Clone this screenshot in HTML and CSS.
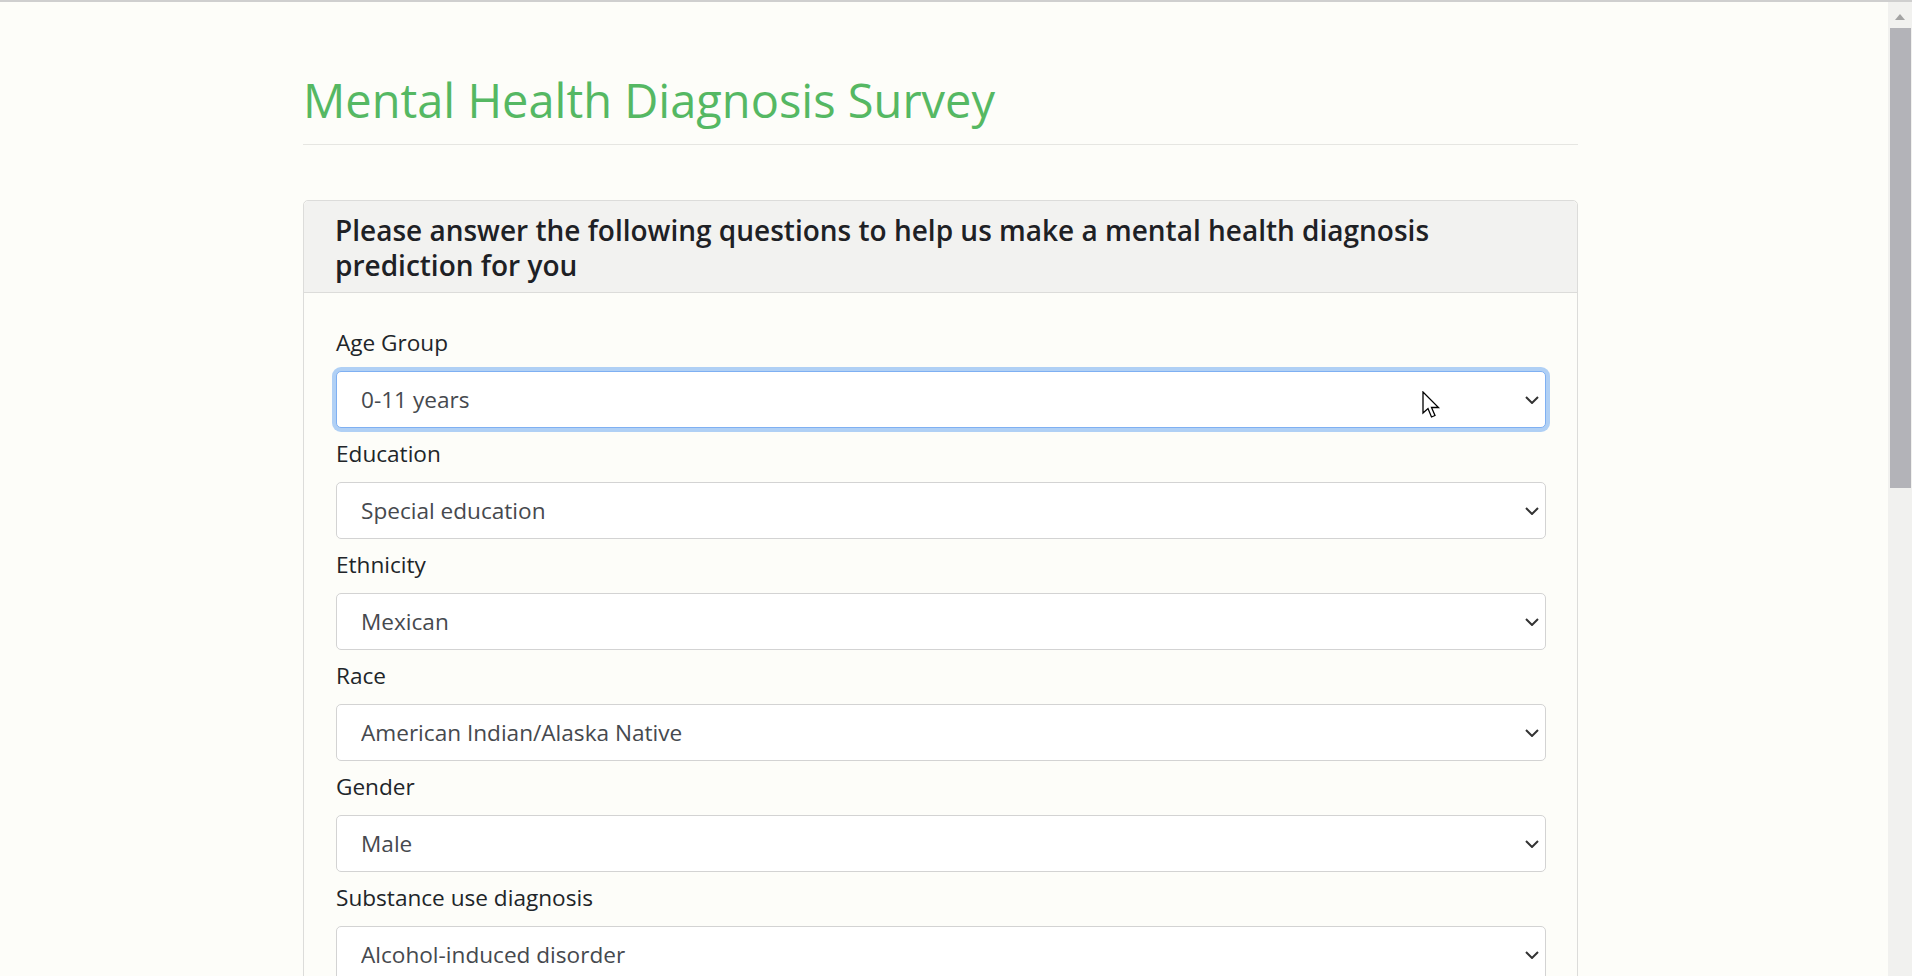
FILE: index.html
```html
<!DOCTYPE html>
<html lang="en">
<head>
<meta charset="utf-8">
<title>Mental Health Diagnosis Survey</title>
<link rel="stylesheet" href="styles.css">
</head>
<body>
<div class="topline"></div>
<div class="viewport">
  <main class="page">
    <div class="container">
      <header class="page-header">
        <h1>Mental Health Diagnosis Survey</h1>
      </header>
      <section class="card">
        <div class="card-header">
          <h2>Please answer the following questions to help us make a mental health diagnosis prediction for you</h2>
        </div>
        <form class="card-body">
          <div class="field">
            <label for="age">Age Group</label>
            <select id="age" class="select is-focused"><option>0-11 years</option></select>
          </div>
          <div class="field">
            <label for="edu">Education</label>
            <select id="edu" class="select"><option>Special education</option></select>
          </div>
          <div class="field">
            <label for="eth">Ethnicity</label>
            <select id="eth" class="select"><option>Mexican</option></select>
          </div>
          <div class="field">
            <label for="race">Race</label>
            <select id="race" class="select"><option>American Indian/Alaska Native</option></select>
          </div>
          <div class="field">
            <label for="gender">Gender</label>
            <select id="gender" class="select"><option>Male</option></select>
          </div>
          <div class="field">
            <label for="sud">Substance use diagnosis</label>
            <select id="sud" class="select"><option>Alcohol-induced disorder</option></select>
          </div>
        </form>
      </section>
    </div>
  </main>
  <div class="scrollbar">
    <div class="sb-arrow"></div>
    <div class="sb-thumb"></div>
  </div>
</div>
<svg class="cursor" width="19" height="28" viewBox="0 0 19 28" aria-hidden="true">
  <path d="M1 1 L1 22 L6 17.5 L9.5 26 L13 24.5 L9.5 16.5 L16.5 16.5 Z" fill="#fff" stroke="#000" stroke-width="1.3" stroke-linejoin="miter"/>
</svg>
</body>
</html>
```
FILE: styles.css
```css
html, body {
  margin: 0;
  height: 100%;
  overflow: hidden;
}
body {
  background: #fdfdf9;
  font-family: "Open Sans", "Noto Sans", "Liberation Sans", sans-serif;
  color: #212529;
  display: flex;
  flex-direction: column;
}
.topline {
  height: 2px;
  background: #cfcfcf;
  flex: none;
}
.viewport {
  flex: 1;
  display: flex;
  min-height: 0;
}
.page {
  flex: 1;
  padding-right: 7px;
  display: flex;
  justify-content: center;
}
.container {
  width: 1275px;
}
.page-header {
  margin-top: 70px;
  padding-bottom: 16px;
  border-bottom: 1px solid #e6e6e2;
}
.page-header h1 {
  margin: 0;
  font-size: 47px;
  line-height: 56px;
  font-weight: 400;
  color: #55b863;
}
.card {
  margin-top: 55px;
  border: 1px solid #dcdcda;
  border-radius: 5px;
  background: #fdfdf9;
}
.card-header {
  background: #f2f2f0;
  border-bottom: 1px solid #dcdcda;
  border-radius: 5px 5px 0 0;
  padding: 12px 31px 9px 31px;
}
.card-header h2 {
  margin: 0;
  font-size: 28px;
  line-height: 35px;
  font-weight: 600;
  color: #1e2125;
}
.card-body {
  padding: 35px 31px 40px 32px;
}
.field {
  display: flex;
  flex-direction: column;
  margin-bottom: 11px;
}
.field label {
  font-size: 22.6px;
  line-height: 30px;
  margin-bottom: 13px;
  color: #212529;
}
.select {
  appearance: none;
  -webkit-appearance: none;
  width: 100%;
  height: 57px;
  box-sizing: border-box;
  margin: 0;
  padding: 0 44px 0 24px;
  font-family: inherit;
  font-size: 22.6px;
  color: #46494e;
  background-color: #fff;
  background-image: url("data:image/svg+xml,%3Csvg xmlns='http://www.w3.org/2000/svg' width='14' height='8' viewBox='0 0 14 8'%3E%3Cpath d='M1 1 L7 7 L13 1' fill='none' stroke='%23333' stroke-width='2'/%3E%3C/svg%3E");
  background-repeat: no-repeat;
  background-position: right 6px center;
  background-size: 14px 8px;
  border: 1px solid #d3d3d3;
  border-radius: 5px;
  outline: none;
}
.select.is-focused {
  border-color: #7fb0f2;
  box-shadow: 0 0 0 4px rgba(70, 145, 240, 0.42);
}
.scrollbar {
  width: 24px;
  flex: none;
  background: #f1f1ef;
  position: relative;
}
.sb-arrow {
  position: absolute;
  left: 7px;
  top: 12px;
  width: 0;
  height: 0;
  border-left: 5px solid transparent;
  border-right: 5px solid transparent;
  border-bottom: 6px solid #a3a3a3;
}
.sb-thumb {
  position: absolute;
  left: 2px;
  right: 1px;
  top: 26px;
  height: 460px;
  background: #b3b3b8;
}
.cursor {
  position: fixed;
  left: 1422px;
  top: 391px;
}
```
